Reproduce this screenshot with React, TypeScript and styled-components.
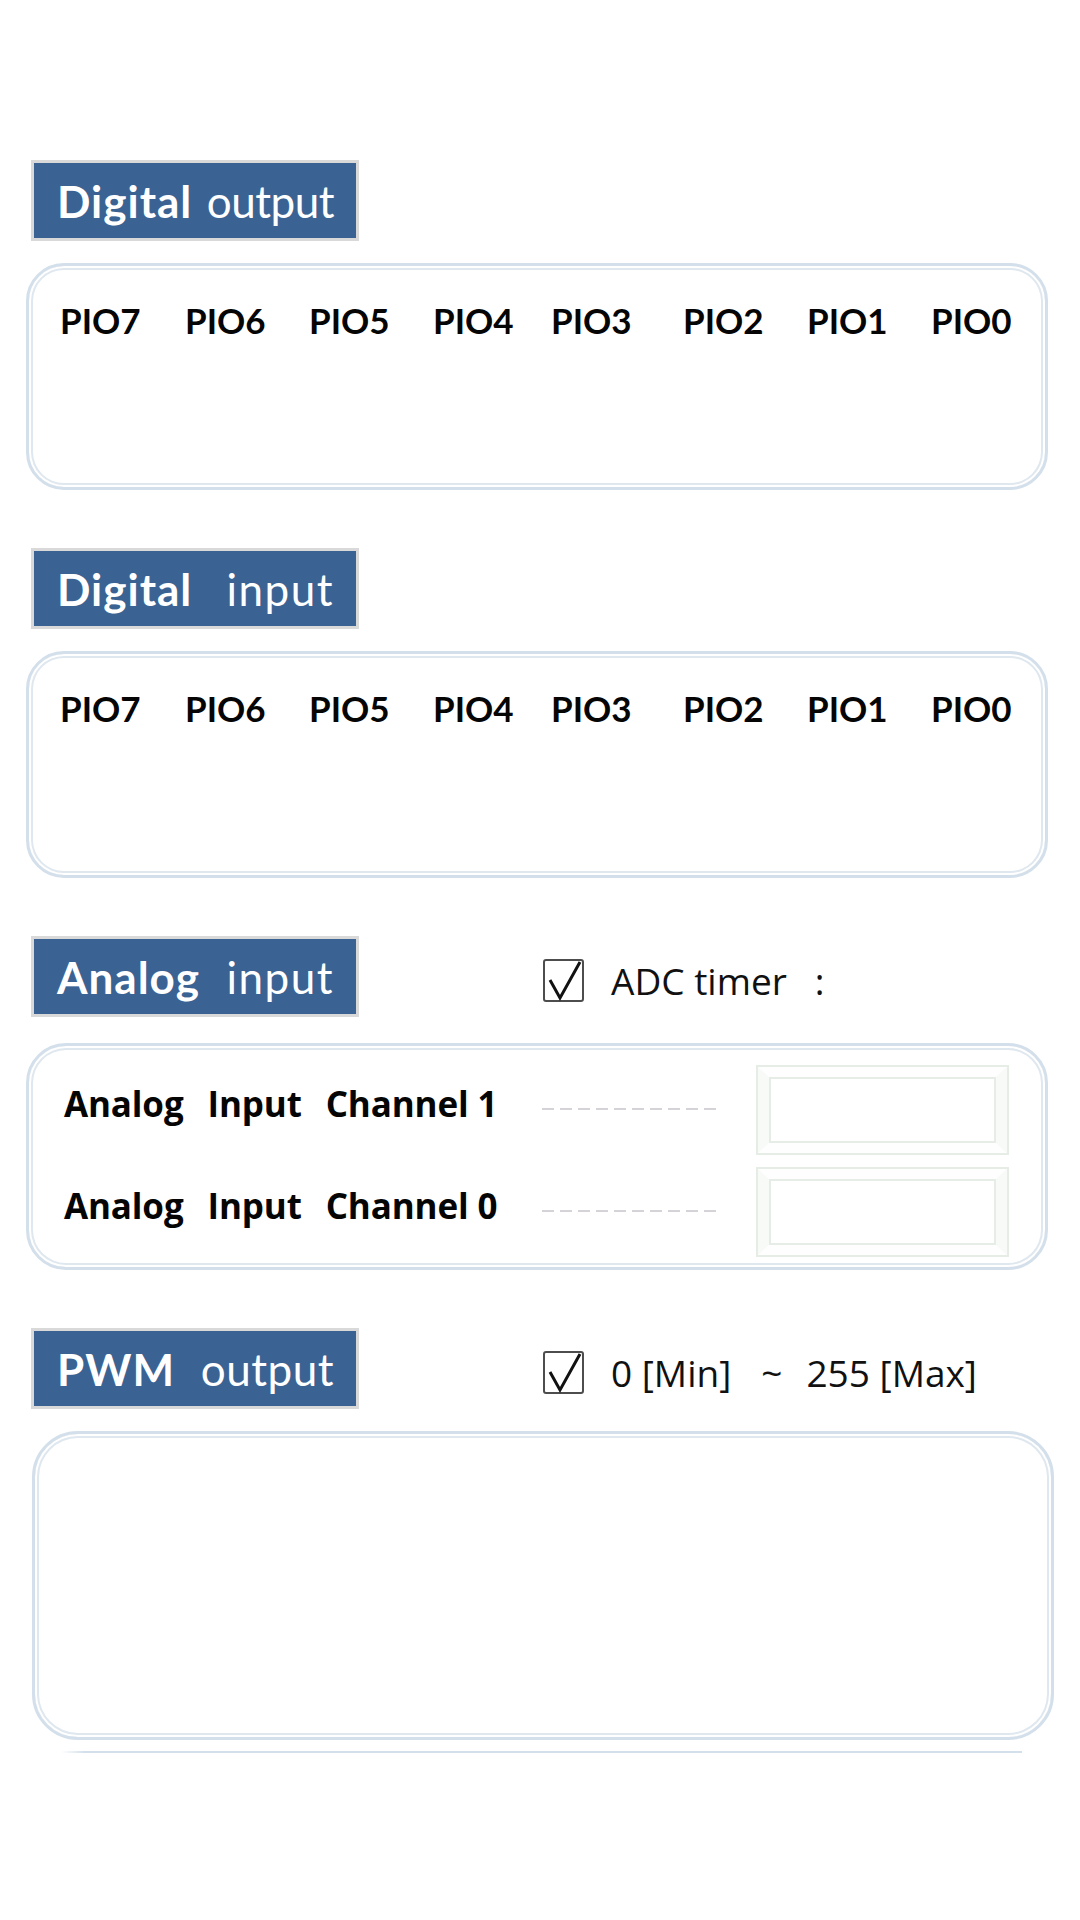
import React from "react";
import styled, { createGlobalStyle } from "styled-components";

const GlobalStyle = createGlobalStyle`
  html, body {
    margin: 0;
    padding: 0;
    background: #ffffff;
  }
  body {
    font-family: "Open Sans", "Liberation Sans", sans-serif;
    color: #000;
  }
`;

const Page = styled.div`
  width: 1080px;
  min-height: 1920px;
  box-sizing: border-box;
  padding: 160px 0 0 26px;
  display: flex;
  flex-direction: column;
  gap: 58px;
`;

const Section = styled.section<{ $gap: number }>`
  display: flex;
  flex-direction: column;
  gap: ${(p) => p.$gap}px;
`;

const HeaderRow = styled.div`
  display: flex;
  align-items: center;
`;

const Badge = styled.div`
  width: 328px;
  height: 81px;
  margin-left: 5px;
  box-sizing: border-box;
  border: 3px solid #d9d9d9;
  background: #3a6394;
  display: flex;
  align-items: center;
  padding: 0 22px 0 23px;
  font-family: Lato, "Open Sans", sans-serif;
  font-size: 44px;
  color: #ffffff;
  flex-shrink: 0;
`;

const BadgeStrong = styled.span`
  font-weight: 700;
  letter-spacing: 1px;
`;

const BadgeLight = styled.span<{ $spacing: number }>`
  margin-left: auto;
  font-weight: 400;
  letter-spacing: ${(p) => p.$spacing}px;
`;

const Options = styled.div`
  display: flex;
  align-items: center;
  margin-left: 184px;
  margin-top: 8px;
  font-family: "Open Sans", "Liberation Sans", sans-serif;
  font-size: 37px;
  color: #111;
`;

const CheckBox = styled.svg`
  width: 41px;
  height: 43px;
  flex-shrink: 0;
  margin-right: 27px;
`;

const OptText = styled.span<{ $ml?: number }>`
  margin-left: ${(p) => p.$ml ?? 0}px;
  white-space: pre;
`;

const Panel = styled.div<{ $h: number; $r: number; $inset?: number }>`
  width: 1022px;
  height: ${(p) => p.$h}px;
  margin-left: ${(p) => p.$inset ?? 0}px;
  box-sizing: border-box;
  border: 3px solid #d3dfea;
  border-radius: ${(p) => p.$r}px;
  box-shadow: inset 0 0 0 2px #ffffff, inset 0 0 0 4px #dfe7ef;
  background: #ffffff;
`;

const PinPanel = styled(Panel)`
  padding: 33px 0 0 31px;
`;

const PinRow = styled.div`
  display: grid;
  grid-template-columns: 125px 124px 124px 118px 132px 124px 124px auto;
  font-family: Lato, "Open Sans", sans-serif;
  font-weight: 700;
  font-size: 35px;
  color: #050505;
`;

const AnalogPanel = styled(Panel)`
  padding: 15px 0 0 35px;
  display: flex;
  flex-direction: column;
  gap: 16px;
`;

const AnalogRow = styled.div`
  display: grid;
  grid-template-columns: 478px 216px 249px;
  align-items: center;
  height: 86px;
`;

const ChannelLabel = styled.div`
  display: flex;
  gap: 24px;
  margin-bottom: 7px;
  font-family: "Open Sans", "Liberation Sans", sans-serif;
  font-weight: 700;
  font-size: 35px;
  letter-spacing: -0.15px;
  color: #050505;
  white-space: pre;
`;

const Dashes = styled.div`
  width: 176px;
  height: 2px;
  margin-top: 3px;
  background: repeating-linear-gradient(
    to right,
    #d6d3d8 0 12px,
    transparent 12px 18px
  );
`;

const ValueBox = styled.div`
  width: 249px;
  height: 86px;
  margin-top: 6px;
  box-sizing: border-box;
  border-style: solid;
  border-width: 10px 11px 10px 11px;
  border-color: #fdfefd #f8faf8 #fdfefd #f8faf8;
  box-shadow: 0 0 0 2px #e6ece6, inset 0 0 0 2px #e6ece6;
  background: #ffffff;
`;

const TrailLine = styled.div`
  width: 961px;
  height: 2px;
  margin: 11px 0 0 35px;
  background: linear-gradient(to right, rgba(211, 223, 234, 0) 0, #d3dfea 24px, #d3dfea 100%);
`;

const Check = () => (
  <CheckBox viewBox="0 0 41 43">
    <rect x="1" y="1" width="39" height="41" rx="2" fill="#fff" stroke="#4d4d4d" strokeWidth="2" />
    <path d="M7 21 L17 39 L37 3" fill="none" stroke="#111" strokeWidth="3" strokeLinejoin="miter" />
  </CheckBox>
);

const pins = ["PIO7", "PIO6", "PIO5", "PIO4", "PIO3", "PIO2", "PIO1", "PIO0"];

const Title = ({ strong, light, spacing = 0 }: { strong: string; light: string; spacing?: number }) => (
  <Badge>
    <BadgeStrong>{strong}</BadgeStrong>
    <BadgeLight $spacing={spacing}>{light}</BadgeLight>
  </Badge>
);

const PinSection = ({ light, spacing }: { light: string; spacing: number }) => (
  <Section $gap={22}>
    <HeaderRow>
      <Title strong="Digital" light={light} spacing={spacing} />
    </HeaderRow>
    <PinPanel $h={227} $r={38}>
      <PinRow>
        {pins.map((p) => (
          <span key={p}>{p}</span>
        ))}
      </PinRow>
    </PinPanel>
  </Section>
);

export default function App() {
  return (
    <>
      <GlobalStyle />
      <Page>
        <PinSection light="output" spacing={-0.5} />
        <PinSection light="input" spacing={1.5} />

        <Section $gap={26}>
          <HeaderRow>
            <Title strong="Analog" light="input" spacing={1.5} />
            <Options>
              <Check />
              <OptText>ADC timer</OptText>
              <OptText $ml={28}>:</OptText>
            </Options>
          </HeaderRow>
          <AnalogPanel $h={227} $r={40}>
            {["1", "0"].map((ch) => (
              <AnalogRow key={ch}>
                <ChannelLabel>
                  <span>Analog</span>
                  <span>Input</span>
                  <span>{`Channel ${ch}`}</span>
                </ChannelLabel>
                <Dashes />
                <ValueBox />
              </AnalogRow>
            ))}
          </AnalogPanel>
        </Section>

        <Section $gap={22}>
          <HeaderRow>
            <Title strong="PWM" light="output" spacing={0.5} />
            <Options>
              <Check />
              <OptText>0 [Min]</OptText>
              <OptText $ml={30}>~</OptText>
              <OptText $ml={24}>255 [Max]</OptText>
            </Options>
          </HeaderRow>
          <div>
            <Panel $h={309} $r={46} $inset={6} />
            <TrailLine />
          </div>
        </Section>
      </Page>
    </>
  );
}
